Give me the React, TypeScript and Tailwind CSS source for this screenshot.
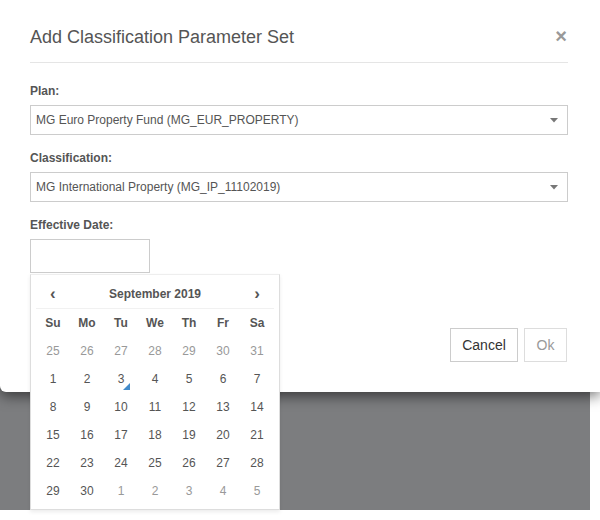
import React from "react";

const weeks: { d: number; muted: boolean; today?: boolean }[][] = [
  [25, 26, 27, 28, 29, 30, 31].map((d) => ({ d, muted: true })),
  [1, 2, 3, 4, 5, 6, 7].map((d) => ({ d, muted: false, today: d === 3 })),
  [8, 9, 10, 11, 12, 13, 14].map((d) => ({ d, muted: false })),
  [15, 16, 17, 18, 19, 20, 21].map((d) => ({ d, muted: false })),
  [22, 23, 24, 25, 26, 27, 28].map((d) => ({ d, muted: false })),
  [
    { d: 29, muted: false },
    { d: 30, muted: false },
    { d: 1, muted: true },
    { d: 2, muted: true },
    { d: 3, muted: true },
    { d: 4, muted: true },
    { d: 5, muted: true },
  ],
];

const days = ["Su", "Mo", "Tu", "We", "Th", "Fr", "Sa"];

function Caret() {
  return (
    <svg width="8" height="5" viewBox="0 0 8 5" className="shrink-0">
      <path d="M0 0 L8 0 L4 4.5 Z" fill="#777" />
    </svg>
  );
}

function Select({ value }: { value: string }) {
  return (
    <div className="h-[30px] border border-[#ccc] bg-white flex items-center pl-[5px] pr-[9px] text-[12px] text-[#555]">
      <span className="flex-1">{value}</span>
      <Caret />
    </div>
  );
}

export default function App() {
  return (
    <div
      className="w-[600px] h-[520px] bg-white relative overflow-hidden"
      style={{ fontFamily: '"Liberation Sans", Arial, sans-serif' }}
    >
      <div className="w-[590px] h-[510px] bg-[#7c7d7f]" />
      <div className="absolute left-0 top-0 w-[600px] h-[392px] bg-white rounded-bl-[6px] shadow-[0_4px_14px_rgba(0,0,0,0.55)] px-[30px]">
        <div className="flex items-start justify-between pt-[27px] pb-[15px] border-b border-[#e5e5e5] w-[538px]">
          <h1 className="text-[18px] leading-[20px] text-[#555]">Add Classification Parameter Set</h1>
          <span className="text-[20px] leading-[18px] font-bold text-[#999] mr-[1px]">×</span>
        </div>
        <div className="w-[538px]">
          <div className="mt-[20px] mb-[6px] text-[12px] leading-[16px] font-bold text-[#555]">Plan:</div>
          <Select value="MG Euro Property Fund (MG_EUR_PROPERTY)" />
          <div className="mt-[15px] mb-[6px] text-[12px] leading-[16px] font-bold text-[#555]">Classification:</div>
          <Select value="MG International Property (MG_IP_11102019)" />
          <div className="mt-[15px] mb-[6px] text-[12px] leading-[16px] font-bold text-[#555]">Effective Date:</div>
          <div className="w-[120px] h-[34px] border border-[#ccc] bg-white" />
          <div className="flex justify-end gap-[6px] mt-[55px] pr-[1px]">
            <button className="w-[68px] h-[34px] border border-[#ccc] bg-white text-[14px] text-[#333]">Cancel</button>
            <button className="w-[43px] h-[34px] border border-[#ddd] bg-white text-[14px] text-[#999]">Ok</button>
          </div>
        </div>
      </div>
      <div className="absolute left-[30px] top-[274px] w-[250px] h-[236px] bg-white border border-[#ddd] border-t-[#eee] px-[5px] pt-[4px] shadow-[0_2px_4px_rgba(0,0,0,0.08)]">
        <div className="flex items-center justify-between h-[30px] border-b border-[#f1f1f1] px-[14px] text-[#555]">
          <span className="text-[17px] font-bold leading-none">‹</span>
          <span className="text-[12px] font-bold">September 2019</span>
          <span className="text-[17px] font-bold leading-none">›</span>
        </div>
        <div className="grid grid-cols-7 h-[28px] items-center text-center text-[12px] font-bold text-[#555]">
          {days.map((d) => (
            <div key={d}>{d}</div>
          ))}
        </div>
        {weeks.map((w, i) => (
          <div key={i} className="grid grid-cols-7 h-[28px] text-center text-[12px]">
            {w.map((c, j) => (
              <div
                key={j}
                className={`relative flex items-center justify-center ${c.muted ? "text-[#999]" : "text-[#555]"}`}
              >
                {c.d}
                {c.today && (
                  <span className="absolute right-[8px] bottom-[3px] w-0 h-0 border-l-[7px] border-l-transparent border-b-[7px] border-b-[#428bca]" />
                )}
              </div>
            ))}
          </div>
        ))}
      </div>
    </div>
  );
}
